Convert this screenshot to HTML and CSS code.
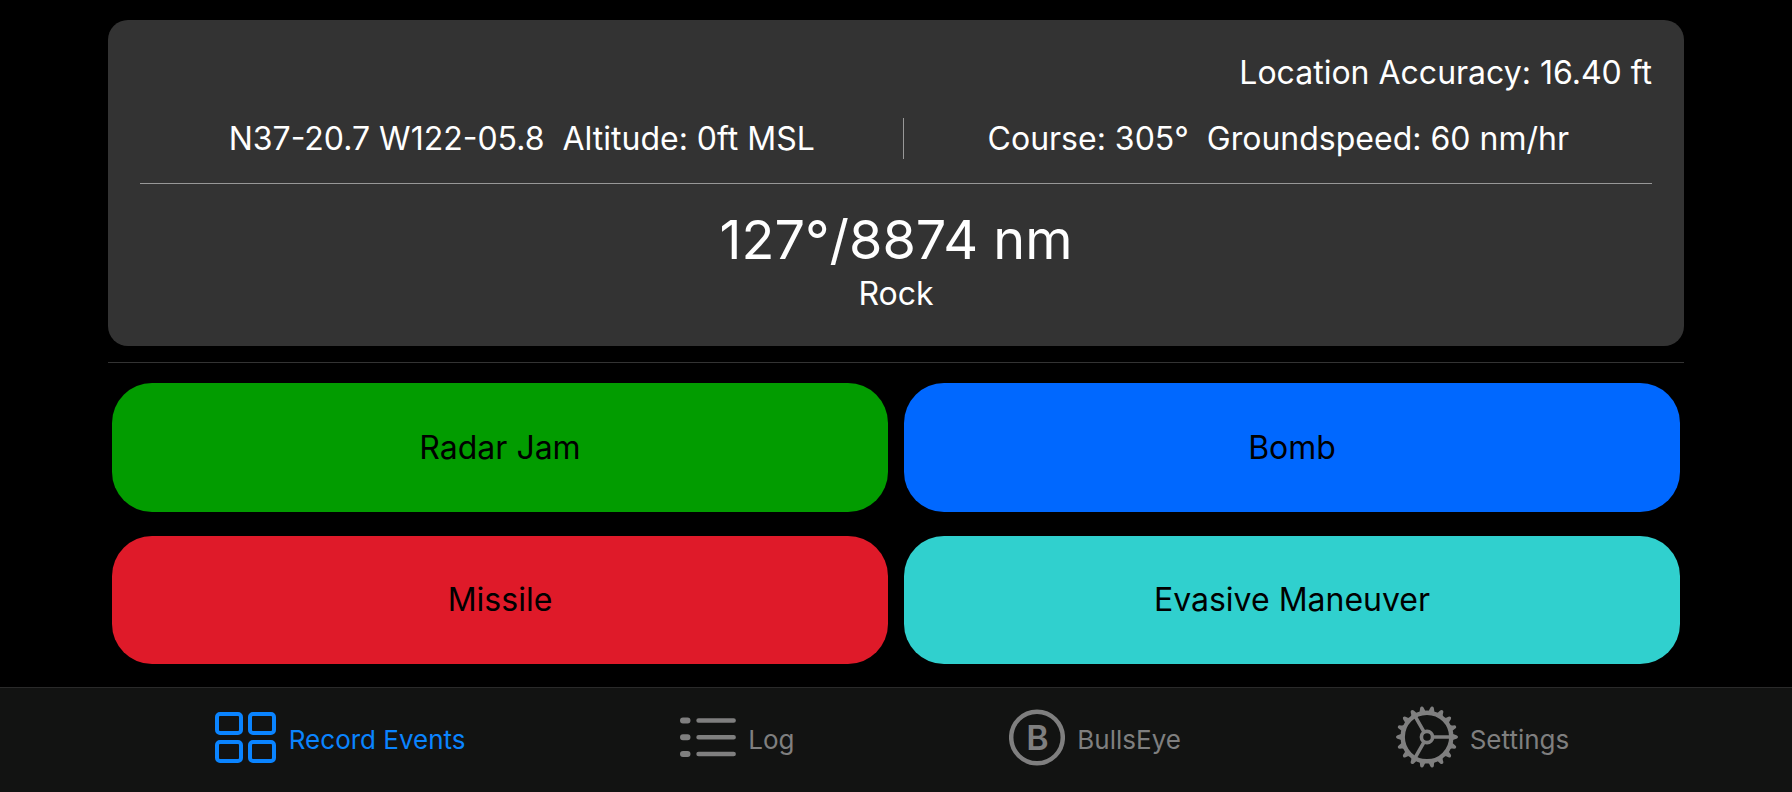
FILE: index.html
```html
<!DOCTYPE html>
<html lang="en">
<head>
<meta charset="utf-8">
<meta name="viewport" content="width=device-width, initial-scale=1">
<title>Record Events</title>
<link rel="stylesheet" href="styles.css">
</head>
<body>
<main class="screen">
  <section class="status-card">
    <p class="accuracy">Location Accuracy: 16.40 ft</p>
    <div class="readings">
      <p class="reading">N37-20.7 W122-05.8&nbsp; Altitude: 0ft MSL</p>
      <p class="reading">Course: 305°&nbsp; Groundspeed: 60 nm/hr</p>
    </div>
    <div class="bullseye">
      <p class="bearing">127°/8874 nm</p>
      <p class="bullseye-name">Rock</p>
    </div>
  </section>
  <hr class="divider">
  <div class="events">
    <button class="event event-radar" type="button">Radar Jam</button>
    <button class="event event-bomb" type="button">Bomb</button>
    <button class="event event-missile" type="button">Missile</button>
    <button class="event event-evasive" type="button">Evasive Maneuver</button>
  </div>
</main>
<nav class="tabs">
  <a class="tab tab-active" href="#record" aria-current="page">
    <svg class="icon" width="62" height="62" viewBox="0 0 62 62" fill="none" stroke="currentColor" stroke-width="4" aria-hidden="true">
      <rect x="2" y="8" width="24" height="19" rx="3"/>
      <rect x="35" y="8" width="24" height="19" rx="3"/>
      <rect x="2" y="36" width="24" height="19" rx="3"/>
      <rect x="35" y="36" width="24" height="19" rx="3"/>
    </svg>
    <span class="tab-label">Record Events</span>
  </a>
  <a class="tab" href="#log">
    <svg class="icon" width="56" height="62" viewBox="0 0 56 62" fill="none" stroke="currentColor" stroke-linecap="round" aria-hidden="true">
      <path stroke-width="6" d="M3 14.5h4.500M3 31.300h4.500M3 48h4.500"/>
      <path stroke-width="4.600" d="M18.600 14.500h35M18.600 31.300h35M18.600 48h35"/>
    </svg>
    <span class="tab-label">Log</span>
  </a>
  <a class="tab" href="#bullseye">
    <svg class="icon" width="56" height="62" viewBox="0 0 56 62" aria-hidden="true">
      <circle cx="28" cy="31.500" r="25.800" fill="none" stroke="currentColor" stroke-width="4.500"/>
      <text class="icon-letter" x="28.500" y="44" text-anchor="middle">B</text>
    </svg>
    <span class="tab-label">BullsEye</span>
  </a>
  <a class="tab" href="#settings">
    <svg class="icon" width="62" height="62" viewBox="-31 -31 62 62" aria-hidden="true">
      <defs>
        <path id="tooth" fill="currentColor" d="M24 -4.800Q26 -2.300 29.500 -1.800Q31 -1.300 31 0Q31 1.300 29.500 1.800Q26 2.300 24 4.800Z"/>
        <g id="teeth">
          <use href="#tooth"/>
          <use href="#tooth" transform="rotate(20)"/>
          <use href="#tooth" transform="rotate(40)"/>
          <use href="#tooth" transform="rotate(60)"/>
          <use href="#tooth" transform="rotate(80)"/>
          <use href="#tooth" transform="rotate(100)"/>
        </g>
      </defs>
      <use href="#teeth"/>
      <use href="#teeth" transform="rotate(120)"/>
      <use href="#teeth" transform="rotate(240)"/>
      <g fill="none" stroke="currentColor">
        <circle r="24.300" stroke-width="4.400"/>
        <circle r="5.600" stroke-width="3.600"/>
        <path stroke-width="3.600" d="M6 0H24M-3 -5.200L-12 -20.800M-3 5.200L-12 20.800"/>
      </g>
    </svg>
    <span class="tab-label">Settings</span>
  </a>
</nav>
</body>
</html>
```

FILE: styles.css
```css
* {
  box-sizing: border-box;
}

body {
  margin: 0;
  min-height: 100vh;
  display: flex;
  flex-direction: column;
  background: #000;
  color: #fff;
  font-family: Inter, "Liberation Sans", sans-serif;
  font-size: 32px;
  line-height: 41px;
}

p {
  margin: 0;
}

.screen {
  flex: 1;
  display: flex;
  flex-direction: column;
  padding: 20px 108px 23px;
}

.status-card {
  padding: 32px;
  border-radius: 20px;
  background: #333;
}

.accuracy {
  text-align: right;
}

.readings {
  display: grid;
  grid-template-columns: 51fr 50fr;
  margin-top: 25px;
  padding-bottom: 24px;
  border-bottom: 1px solid #989898;
}

.reading {
  text-align: center;
}

.reading + .reading {
  border-left: 1px solid #989898;
}

.bullseye {
  padding-top: 22px;
  text-align: center;
}

.bearing {
  font-size: 54px;
  line-height: 67px;
}

.divider {
  width: 100%;
  margin: 16px 0 20px;
  border: 0;
  border-top: 1px solid #333;
}

.events {
  flex: 1;
  display: grid;
  grid-template-columns: 1fr 1fr;
  grid-auto-rows: 1fr;
  gap: 24px 16px;
  padding: 0 4px;
}

.event {
  min-height: 96px;
  border: 0;
  border-radius: 40px;
  color: #000;
  font: inherit;
  cursor: pointer;
}

.event-radar {
  background: #029c00;
}

.event-bomb {
  background: #0068ff;
}

.event-missile {
  background: #df1a29;
}

.event-evasive {
  background: #30d0ce;
}

.tabs {
  display: flex;
  justify-content: space-evenly;
  padding: 18px 8px 24px 0;
  border-top: 1px solid #2a2a2a;
  background: #121312;
}

.tab {
  display: flex;
  align-items: center;
  gap: 12px;
  color: #7f7f7f;
  font-size: 26px;
  text-decoration: none;
}

.tab-active {
  color: #0a84ff;
}

.tab-label {
  padding-top: 4px;
}

.icon {
  flex: none;
}

.icon-letter {
  fill: currentColor;
  font-size: 34px;
  font-weight: 600;
}
```
